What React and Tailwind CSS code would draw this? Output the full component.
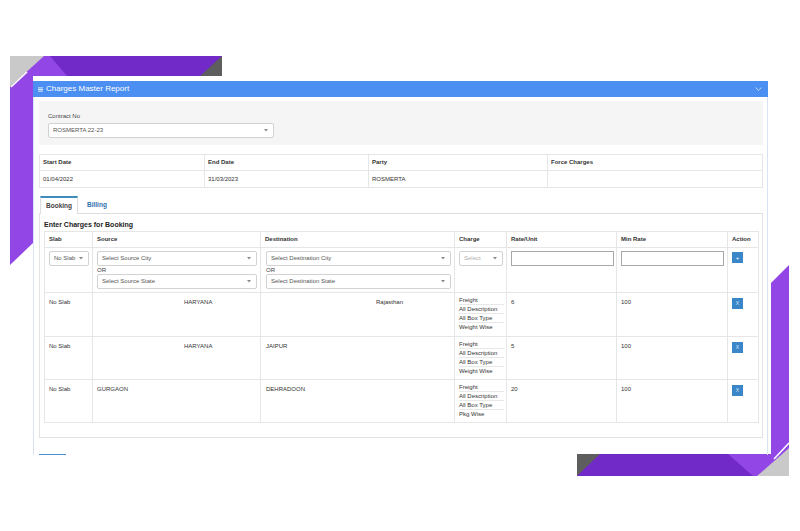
const font = { fontFamily: '"Liberation Sans", Arial, sans-serif' };

const rows = [
  {
    slab: "No Slab",
    source: "HARYANA",
    sourcePad: "pl-[91px]",
    dest: "Rajasthan",
    destPad: "pl-[115px]",
    charges: ["Freight", "All Description", "All Box Type", "Weight Wise"],
    rate: "6",
    min: "100",
    h: "h-[44px]",
  },
  {
    slab: "No Slab",
    source: "HARYANA",
    sourcePad: "pl-[91px]",
    dest: "JAIPUR",
    destPad: "pl-[5px]",
    charges: ["Freight", "All Description", "All Box Type", "Weight Wise"],
    rate: "5",
    min: "100",
    h: "h-[43px]",
  },
  {
    slab: "No Slab",
    source: "GURGAON",
    sourcePad: "pl-[4px]",
    dest: "DEHRADOON",
    destPad: "pl-[5px]",
    charges: ["Freight", "All Description", "All Box Type", "Pkg Wise"],
    rate: "20",
    min: "100",
    h: "h-[43px]",
  },
];

const Caret = () => (
  <svg width="4" height="3" viewBox="0 0 4 3" className="shrink-0">
    <path d="M0 0 L4 0 L2 2.5 Z" fill="#888" />
  </svg>
);

const Select = ({ text, width, muted }) => (
  <div
    className={`${width} h-[15px] bg-white border border-[#d2d2d2] rounded-[2px] flex items-center justify-between pl-[4px] pr-[5px] text-[6px] ${
      muted ? "text-[#b0b0b0]" : "text-[#555]"
    }`}
  >
    <span>{text}</span>
    <Caret />
  </div>
);

const Decoration = () => (
  <svg
    className="absolute inset-0 pointer-events-none"
    width="800"
    height="531"
    viewBox="0 0 800 531"
  >
    {/* top-left frame */}
    <rect x="10" y="56" width="212" height="20" fill="#7129c7" />
    <polygon points="10,56 50,56 67,76 33,76 33,243 10,265" fill="#9346e6" />
    <polygon points="10,56 44,56 10,87" fill="#c9c9c9" />
    <line x1="27" y1="72" x2="11" y2="87" stroke="#ffffff" strokeWidth="1.6" />
    <polygon points="200,76 222,56 222,76" fill="#5e5e5e" />
    {/* bottom-right frame */}
    <rect x="577" y="454" width="212" height="22" fill="#7129c7" />
    <polygon points="771,283 789,265 789,476 753,476 728,454 771,454" fill="#9346e6" />
    <polygon points="577,454 600,454 577,476" fill="#5e5e5e" />
    <polygon points="789,448 789,476 757,476" fill="#c9c9c9" />
    <line x1="774" y1="459" x2="789" y2="443" stroke="#ffffff" strokeWidth="1.6" />
  </svg>
);

export default function App() {
  return (
    <div
      className="relative w-[800px] h-[531px] overflow-hidden bg-white pt-[81px] pl-[33px] text-[#333]"
      style={font}
    >
      <Decoration />
      <div className="relative w-[735px] h-[374px] overflow-hidden">
        {/* header */}
        <div className="h-[16px] bg-[#4c8ff2] flex items-center justify-between pl-[5px] pr-[6px] text-white">
          <div className="flex items-center gap-[3px] text-[8px]">
            <svg width="5" height="5" viewBox="0 0 5 5">
              <rect y="0.5" width="5" height="0.8" fill="#fff" />
              <rect y="2.1" width="5" height="0.8" fill="#fff" />
              <rect y="3.7" width="5" height="0.8" fill="#fff" />
            </svg>
            <span>Charges Master Report</span>
          </div>
          <svg width="7" height="4" viewBox="0 0 7 4">
            <path d="M0.5 0.5 L3.5 3.3 L6.5 0.5" stroke="#d6e4fb" strokeWidth="0.8" fill="none" />
          </svg>
        </div>

        {/* body */}
        <div className="h-[358px] border-x border-[#d8e4f6] pl-[5px] pr-[4px] pt-[4px]">
          {/* contract */}
          <div className="h-[44px] bg-[#f5f5f5] pl-[9px] pt-[11px]">
            <div className="text-[6px] leading-[8px] text-[#444]">Contract No</div>
            <div className="mt-[3px]">
              <Select text="ROSMERTA 22-23" width="w-[226px]" />
            </div>
          </div>

          {/* info table */}
          <div className="mt-[9px] border border-[#e6e6e6] text-[6px]">
            <div className="grid grid-cols-[165px_164px_179px_1fr] h-[16px] border-b border-[#e6e6e6] font-bold">
              <div className="pl-[3px] flex items-center border-r border-[#e6e6e6]">Start Date</div>
              <div className="pl-[3px] flex items-center border-r border-[#e6e6e6]">End Date</div>
              <div className="pl-[3px] flex items-center border-r border-[#e6e6e6]">Party</div>
              <div className="pl-[3px] flex items-center">Force Charges</div>
            </div>
            <div className="grid grid-cols-[165px_164px_179px_1fr] h-[16px]">
              <div className="pl-[3px] flex items-center border-r border-[#e6e6e6]">01/04/2022</div>
              <div className="pl-[3px] flex items-center border-r border-[#e6e6e6]">31/03/2023</div>
              <div className="pl-[3px] flex items-center border-r border-[#e6e6e6]">ROSMERTA</div>
              <div />
            </div>
          </div>

          {/* tabs */}
          <div className="mt-[9px] h-[17px] border-b border-[#dddddd] flex items-end">
            <div className="ml-[1px] w-[38px] h-[18px] -mb-px bg-white border-t-2 border-t-[#3c8dbc] border-x border-x-[#dddddd] flex items-center justify-center text-[6.5px] font-bold text-[#444]">
              Booking
            </div>
            <div className="ml-[9px] h-[17px] flex items-center text-[6.5px] font-bold text-[#2f6fb0]">
              Billing
            </div>
          </div>

          {/* tab content */}
          <div className="h-[224px] border-x border-b border-[#e3e3e3] px-[4px]">
            <div className="pt-[6px] text-[7px] leading-[10px] font-bold text-[#222]">
              Enter Charges for Booking
            </div>
            <table className="mt-[1px] w-[714px] table-fixed border-collapse text-[6px]">
              <colgroup>
                <col className="w-[48px]" />
                <col className="w-[168px]" />
                <col className="w-[194px]" />
                <col className="w-[52px]" />
                <col className="w-[110px]" />
                <col className="w-[111px]" />
                <col className="w-[31px]" />
              </colgroup>
              <thead>
                <tr className="h-[16px] font-bold">
                  {["Slab", "Source", "Destination", "Charge", "Rate/Unit", "Min Rate", "Action"].map((h) => (
                    <td key={h} className="border border-[#e6e6e6] pl-[4px] align-middle">
                      {h}
                    </td>
                  ))}
                </tr>
              </thead>
              <tbody>
                <tr className="h-[45px]">
                  <td className="border border-[#e6e6e6] align-top pt-[3px] pl-[4px]">
                    <Select text="No Slab" width="w-[40px]" />
                  </td>
                  <td className="border border-[#e6e6e6] align-top pt-[3px] pl-[4px] pr-[3px]">
                    <Select text="Select Source City" width="w-full" />
                    <div className="leading-[8px] text-[#444]">OR</div>
                    <Select text="Select Source State" width="w-full" />
                  </td>
                  <td className="border border-[#e6e6e6] align-top pt-[3px] pl-[5px] pr-[3px]">
                    <Select text="Select Destination City" width="w-full" />
                    <div className="leading-[8px] text-[#444]">OR</div>
                    <Select text="Select Destination State" width="w-full" />
                  </td>
                  <td className="border border-[#e6e6e6] align-top pt-[3px] pl-[4px]">
                    <Select text="Select" width="w-[44px]" muted />
                  </td>
                  <td className="border border-[#e6e6e6] align-top pt-[3px] pl-[4px]">
                    <div className="w-[103px] h-[15px] border border-[#a8a8a8] bg-white" />
                  </td>
                  <td className="border border-[#e6e6e6] align-top pt-[3px] pl-[4px]">
                    <div className="w-[103px] h-[15px] border border-[#a8a8a8] bg-white" />
                  </td>
                  <td className="border border-[#e6e6e6] align-top pt-[4px] pl-[4px]">
                    <div className="w-[11px] h-[11px] bg-[#3b86c8] text-white text-[6px] flex items-center justify-center leading-none">
                      +
                    </div>
                  </td>
                </tr>
                {rows.map((r, i) => (
                  <tr key={i} className={r.h}>
                    <td className="border border-[#e6e6e6] align-top pt-[5px] pl-[4px]">{r.slab}</td>
                    <td className={`border border-[#e6e6e6] align-top pt-[5px] ${r.sourcePad}`}>{r.source}</td>
                    <td className={`border border-[#e6e6e6] align-top pt-[5px] ${r.destPad}`}>{r.dest}</td>
                    <td className="border border-[#e6e6e6] align-top pt-[3px] pl-[4px] pr-[2px]">
                      {r.charges.map((c, j) => (
                        <div
                          key={c}
                          className={`h-[9px] leading-[9px] ${j < 3 ? "border-b border-[#e8e8e8]" : ""}`}
                        >
                          {c}
                        </div>
                      ))}
                    </td>
                    <td className="border border-[#e6e6e6] align-top pt-[5px] pl-[4px]">{r.rate}</td>
                    <td className="border border-[#e6e6e6] align-top pt-[5px] pl-[4px]">{r.min}</td>
                    <td className="border border-[#e6e6e6] align-top pt-[5px] pl-[4px]">
                      <div className="w-[11px] h-[11px] bg-[#3b86c8] text-[#dbe9f7] text-[5px] flex items-center justify-center leading-none">
                        X
                      </div>
                    </td>
                  </tr>
                ))}
              </tbody>
            </table>
          </div>

          {/* next section tab hint */}
          <div className="mt-[16px] w-[27px] h-[2px] bg-[#4a8fd8]" />
        </div>
      </div>
    </div>
  );
}
